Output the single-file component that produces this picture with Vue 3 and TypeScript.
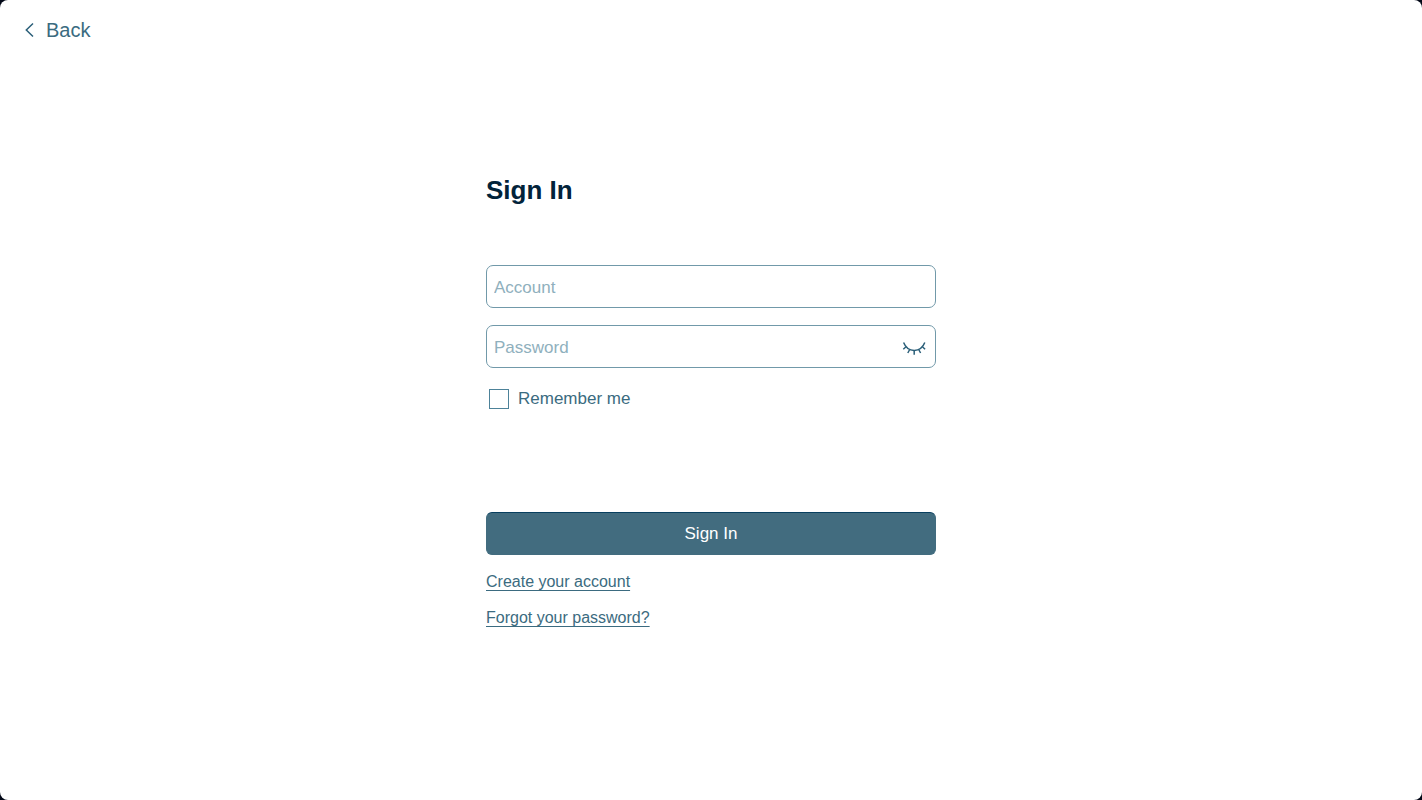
<script setup lang="ts">
import { ref } from 'vue'

const account = ref<string>('')
const password = ref<string>('')
const remember = ref<boolean>(false)
const passwordVisible = ref<boolean>(false)
</script>

<template>
  <div class="window">
    <header class="top-bar">
      <button type="button" class="back">
        <svg class="chevron" viewBox="0 0 10 16" width="10" height="16" aria-hidden="true">
          <path d="M9 1.5 2.3 8 9 14.5" />
        </svg>
        <span>Back</span>
      </button>
    </header>

    <main class="content">
      <form class="form" @submit.prevent>
        <h1 class="title">Sign In</h1>

        <div class="fields">
          <div class="field">
            <input
              v-model="account"
              class="field-input"
              type="text"
              placeholder="Account"
              aria-label="Account"
              autocomplete="username"
            />
          </div>
          <div class="field">
            <input
              v-model="password"
              class="field-input"
              :type="passwordVisible ? 'text' : 'password'"
              placeholder="Password"
              aria-label="Password"
              autocomplete="current-password"
            />
            <button
              type="button"
              class="reveal"
              aria-label="Show password"
              :aria-pressed="passwordVisible"
              @click="passwordVisible = !passwordVisible"
            >
              <svg viewBox="0 0 24 18" width="24" height="18" aria-hidden="true">
                <path d="M1.6 4.5C3.6 9.6 7.2 12.4 12.2 12.4S20.8 9.6 22.8 4.5" />
                <path d="M4 8.8 1.3 11.2M7.7 11.5 5.8 15M12.2 12.4v4.4M16.7 11.5l1.9 3.5M20.4 8.8l2.7 2.4" />
              </svg>
            </button>
          </div>
        </div>

        <label class="remember">
          <input v-model="remember" class="tick" type="checkbox" />
          <span>Remember me</span>
        </label>

        <button type="submit" class="submit">Sign In</button>

        <nav class="links">
          <a href="#create">Create your account</a>
          <a href="#forgot">Forgot your password?</a>
        </nav>
      </form>
    </main>
  </div>
</template>

<style>
html,
body {
  margin: 0;
  background: #020817;
}
</style>

<style scoped>
.window {
  box-sizing: border-box;
  min-height: 100vh;
  display: flex;
  flex-direction: column;
  border-radius: 8px;
  background: #fff;
  color: #3b6b80;
  font-family: "Liberation Sans", Arial, sans-serif;
  font-size: 17px;
  line-height: 20px;
}

button,
input {
  margin: 0;
  padding: 0;
  font: inherit;
  color: inherit;
}

button {
  border: 0;
  background: none;
  cursor: pointer;
}

svg {
  display: block;
  fill: none;
  stroke: #2b5f79;
  stroke-width: 1.5;
}

.top-bar {
  display: flex;
  padding: 18px 24px;
}

.back {
  display: flex;
  align-items: center;
  gap: 12px;
  font-size: 20px;
  line-height: 24px;
}

.content {
  display: flex;
  justify-content: center;
  padding: 114px 24px 60px;
}

.form {
  display: flex;
  flex-direction: column;
  width: 100%;
  max-width: 450px;
}

.title {
  margin: 0 0 59px;
  color: #02233a;
  font-size: 26px;
  font-weight: 700;
  line-height: 32px;
}

.fields {
  display: flex;
  flex-direction: column;
  gap: 17px;
}

.field {
  box-sizing: border-box;
  display: flex;
  align-items: center;
  height: 43px;
  padding: 0 9px 0 7px;
  border: 1px solid #7199a9;
  border-radius: 7px;
}

.field-input {
  box-sizing: border-box;
  flex: 1;
  min-width: 0;
  height: 100%;
  padding-top: 2px;
  border: 0;
  outline: 0;
  background: none;
}

.field-input::placeholder {
  color: #8fb0bd;
  opacity: 1;
}

.remember {
  display: flex;
  align-self: flex-start;
  align-items: center;
  gap: 9px;
  margin: 21px 0 0 3px;
}

.tick {
  appearance: none;
  box-sizing: border-box;
  width: 20px;
  height: 20px;
  border: 1px solid #4d8299;
  background: #fff;
}

.tick:checked {
  box-shadow: inset 0 0 0 3px #fff;
  background: #426c7f;
}

.submit {
  height: 43px;
  margin-top: 103px;
  border: 1px solid #426c7f;
  border-top-color: #083f5f;
  border-radius: 6px;
  background: #426c7f;
  color: #fff;
}

.links {
  display: flex;
  flex-direction: column;
  align-items: flex-start;
  gap: 16px;
  margin-top: 17px;
  font-size: 16px;
}

.links a {
  color: inherit;
  text-decoration: underline;
  text-decoration-thickness: 1px;
  text-decoration-skip-ink: none;
  text-underline-offset: 3px;
}
</style>
